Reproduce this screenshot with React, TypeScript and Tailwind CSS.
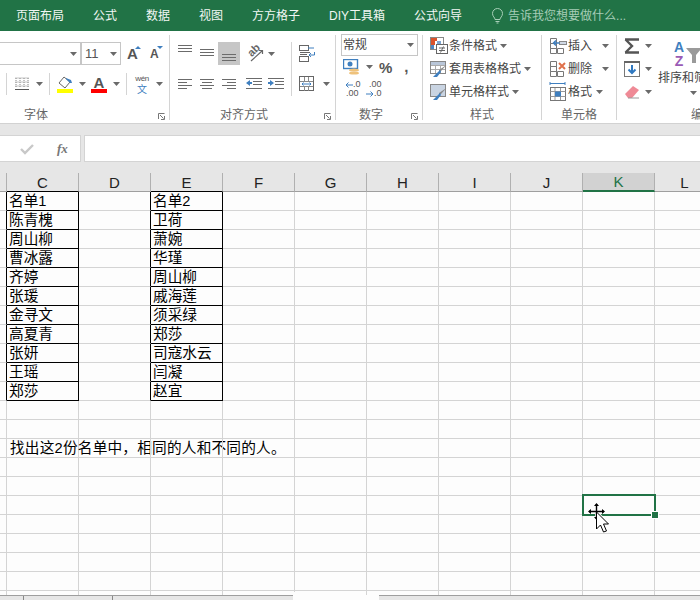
import React from "react";

const C = "#6b6b6b";
const B = "#3f7fbf";

const Caret = ({ className = "" }: { className?: string }) => (
  <svg width="7" height="4" viewBox="0 0 7 4" className={"shrink-0 " + className}>
    <path d="M0 0h7L3.5 4z" fill="#6a6a6a" />
  </svg>
);

const Ic = ({ w, h = 22, className = "", children }: { w: number; h?: number; className?: string; children: React.ReactNode }) => (
  <svg width={w} height={h} viewBox={`0 0 ${w} ${h}`} className={"shrink-0 " + className}>
    {children}
  </svg>
);

const Lines = ({ l, color = C }: { l: number[][]; color?: string }) => (
  <>
    {l.map((a, i) => (
      <rect key={i} x={a[0]} y={a[1]} width={a[2]} height={1} fill={color} />
    ))}
  </>
);

const VSep = ({ className = "" }: { className?: string }) => <div className={"w-px h-[22px] bg-[#d4d4d4] shrink-0 " + className} />;

const Group = ({ w, label, labelClass, launcher, children }: { w: string; label: string; labelClass: string; launcher?: string; children: React.ReactNode }) => (
  <div className={"relative flex flex-col h-[85px] shrink-0 " + w}>
    <div className="flex-1 min-h-0">{children}</div>
    <div className={"h-[14px] -mb-[2px] text-[12px] leading-[14px] text-[#666666] whitespace-nowrap " + labelClass}>{label}</div>
    {launcher && (
      <svg width="7" height="7" viewBox="0 0 7 7" className={"absolute bottom-0 " + launcher}>
        <path d="M0.5 6V0.5H6.5M6.5 3V6.5H3M2 2L5.5 5.5" fill="none" stroke="#777" strokeWidth="1" />
      </svg>
    )}
  </div>
);

const Sep = () => <div className="w-px h-[85px] bg-[#d4d4d4] shrink-0" />;

const IconCond = () => (
  <Ic w={18} h={18}>
    <rect x="0.5" y="0.5" width="13" height="12" fill="#fff" stroke="#888" />
    <rect x="1" y="1" width="6" height="3" fill="#d9532c" />
    <rect x="1" y="4" width="4" height="4" fill="#d9532c" />
    <rect x="7" y="4" width="4" height="3" fill="#7ea6d2" />
    <rect x="1" y="8" width="3" height="4" fill="#4f86c0" />
    <rect x="6.5" y="7.5" width="11" height="9" fill="#fff" stroke="#666" />
    <path d="M9 11h6M9 13.5h6M13.5 9.5l-3 6" stroke="#666" fill="none" />
  </Ic>
);
const IconTable = ({ brushed = true, plain = false }: { brushed?: boolean; plain?: boolean }) => (
  <Ic w={18} h={18}>
    <rect x="0.5" y="1.5" width="15" height="12" fill={plain ? "#c9d4e2" : "#fff"} stroke="#888" />
    {!plain && <path d="M5.5 2v11M10.5 2v11M1 5.5h14M1 9.5h14" stroke="#aaa" />}
    {!plain && <rect x="1" y="2" width="14" height="3" fill="#b9c6d8" />}
    {brushed && <path d="M16.5 5L11 11l-2 0 0-1z" fill="#8a8a8a" />}
    <path d="M10 10l-5 5-2 2h4l4-5z" fill="#3f7fbf" />
  </Ic>
);
const IconCellGrid = ({ kind }: { kind: "ins" | "del" }) => (
  <Ic w={18} h={18}>
    <path d="M1.5 1.5h6v5h-6zM1.5 11.5h6v5h-6zM8.5 11.5h6v5h-6zM1.5 6.5h6v5h-6z" fill="#fff" stroke="#777" />
    {kind === "ins" ? (
      <>
        <rect x="10.5" y="4.5" width="7" height="3" fill="#cfd8e4" stroke="#888" />
        <path d="M4.5 6h6M7 3.5L4.5 6 7 8.5" stroke="#3f7fbf" strokeWidth="1.5" fill="none" />
      </>
    ) : (
      <path d="M10 3l6 6M16 3l-6 6" stroke="#e0714a" strokeWidth="2" fill="none" />
    )}
  </Ic>
);
const IconFormat = () => (
  <Ic w={18} h={20}>
    <path d="M1 1.5h15M1 0v3M16 0v3" stroke="#3f7fbf" fill="none" />
    <rect x="1.5" y="5.5" width="15" height="13" fill="#fff" stroke="#777" />
    <path d="M1.5 9.5h15M1.5 14.5h15M6 6v12M11.5 6v12" stroke="#999" />
    <rect x="6" y="9.5" width="6" height="5" fill="#3f7fbf" />
  </Ic>
);

const tabs = ["页面布局", "公式", "数据", "视图", "方方格子", "DIY工具箱", "公式向导"];
const cols = ["C", "D", "E", "F", "G", "H", "I", "J", "K", "L"];
const colC = ["名单1", "陈青槐", "周山柳", "曹冰露", "齐婷", "张瑗", "金寻文", "高夏青", "张妍", "王瑶", "郑莎"];
const colE = ["名单2", "卫荷", "萧婉", "华瑾", "周山柳", "戚海莲", "须采绿", "郑莎", "司寇水云", "闫凝", "赵宜"];
const NOTE_ROW = 13;

const StyleRow = ({ icon, label, caretClass }: { icon: React.ReactNode; label: string; caretClass: string }) => (
  <div className="flex items-center h-[23px] pl-[7px]">
    {icon}
    <span className="ml-[1px] text-[12px] text-[#444444] whitespace-nowrap">{label}</span>
    <Caret className={caretClass} />
  </div>
);

export default function App() {
  return (
    <div className="relative w-[700px] h-[600px] overflow-hidden flex flex-col bg-[#e6e6e6] font-['Liberation_Sans','Noto_Sans_CJK_SC',sans-serif]">
      {/* title tabs */}
      <div className="h-[31px] bg-[#217346] flex items-center pl-[16px] shrink-0">
        <div className="flex gap-[29px] text-[12px] text-[#f2f7f4] whitespace-nowrap">
          {tabs.map((t) => (
            <span key={t}>{t}</span>
          ))}
        </div>
        <svg width="13" height="16" viewBox="0 0 13 16" className="ml-[29px] shrink-0">
          <path d="M4 11.5C4 9.5 1.5 8.5 1.5 5.5a5 5 0 0 1 10 0c0 3-2.5 4-2.5 6zM4.5 13.5h4M5.5 15h2" fill="none" stroke="#a9cfb9" />
        </svg>
        <span className="ml-[4px] text-[12px] text-[#a6cdb7] whitespace-nowrap">告诉我您想要做什么...</span>
      </div>

      {/* ribbon */}
      <div className="h-[93px] bg-white border-b border-[#d2d2d2] flex pt-[4px] overflow-hidden shrink-0">
        <Group w="w-[169px]" label="字体" labelClass="pl-[24px]" launcher="left-[158px]">
          <div className="flex items-center h-[23px] mt-[7px]">
            <div className="w-[81px] h-[23px] bg-white border border-l-0 border-[#c6c6c6] flex items-center justify-end pr-[3px]">
              <Caret />
            </div>
            <div className="w-[40px] h-[23px] border border-[#c6c6c6] flex items-center pl-[3px] pr-[3px] justify-between">
              <span className="text-[13px] text-[#555555]">11</span>
              <Caret />
            </div>
            <div className="ml-[6px] w-[14px] flex items-start">
              <span className="w-[11px] text-[15px] leading-[17px] font-bold text-[#555555]">A</span>
              <Ic w={6} h={3} className="-ml-[3px] mt-[1px]">
                <path d="M0 3l3-3 3 3z" fill={B} />
              </Ic>
            </div>
            <div className="ml-[9px] w-[13px] flex items-start">
              <span className="w-[8px] text-[12px] leading-[17px] font-bold text-[#555555] mt-[1px]">A</span>
              <Ic w={6} h={3} className="-ml-[1px] mt-[1px]">
                <path d="M0 0h6L3 3z" fill={B} />
              </Ic>
            </div>
          </div>
          <div className="flex items-center h-[22px] mt-[8px] pl-[6px]">
            <VSep />
            <Ic w={14} h={14} className="ml-[8px]">
              <path d="M0.5 1h13M0.5 5h13M0.5 9h13M1 1v9M5 1v9M9 1v9M13 1v9" stroke="#888" strokeDasharray="1 1" fill="none" />
              <rect x="0" y="12" width="14" height="1" fill="#555" />
            </Ic>
            <Caret className="ml-[7px]" />
            <VSep className="ml-[6px]" />
            <div className="ml-[7px] flex flex-col w-[16px]">
              <Ic w={16} h={13}>
                <path d="M7 1l6 5-5 6-6-5z" fill="#fff" stroke="#666" />
                <path d="M9 2l5 2 1 3-2 0-4-4z" fill={B} />
              </Ic>
              <div className="h-[4px] bg-[#ffff00] w-[16px]" />
            </div>
            <Caret className="ml-[6px]" />
            <div className="ml-[5px] flex flex-col w-[16px] items-center">
              <span className="h-[13px] leading-[14px] text-[15px] font-bold text-[#555555]">A</span>
              <div className="h-[4px] bg-[#ff0000] w-[16px]" />
            </div>
            <Caret className="ml-[6px]" />
            <VSep className="ml-[6px]" />
            <div className="ml-[7px] w-[16px] flex flex-col items-center">
              <span className="text-[8px] leading-[10px] text-[#555555] tracking-tighter">wén</span>
              <span className="text-[10px] leading-[11px] text-[#3f7fbf]">文</span>
            </div>
            <Caret className="ml-[6px]" />
          </div>
        </Group>
        <Sep />
        <Group w="w-[165px]" label="对齐方式" labelClass="pl-[50px]" launcher="left-[154px]">
          <div className="flex items-center h-[23px] mt-[7px] pl-[8px]">
            <Ic w={14} h={23}>
              <Lines l={[[0, 3, 14], [0, 6, 14], [0, 9, 14]]} />
            </Ic>
            <Ic w={14} h={23} className="ml-[8px]">
              <Lines l={[[0, 7, 14], [0, 10, 14], [0, 13, 14]]} />
            </Ic>
            <div className="ml-[4px] w-[22px] h-[23px] bg-[#c6c6c6] flex items-center justify-center">
              <Ic w={14} h={23}>
                <Lines l={[[0, 12, 14], [0, 15, 14], [0, 18, 14]]} />
              </Ic>
            </div>
            <div className="relative ml-[6px] w-[18px] h-[20px]">
              <span className="absolute left-[1px] top-[0px] text-[11px] leading-[12px] font-bold text-[#666666] -rotate-45">ab</span>
              <Ic w={18} h={20} className="absolute left-0 top-0">
                <path d="M5 17L16 7M13 6.5h3.5V10" stroke="#666" fill="none" strokeWidth="1.2" />
              </Ic>
            </div>
            <Caret className="ml-[4px]" />
            <VSep className="ml-[16px] h-[54px] -mb-[31px] mt-[0px]" />
            <Ic w={17} h={18} className="ml-[7px]">
              <rect x="0.5" y="0.5" width="9" height="5" fill="none" stroke="#666" />
              <rect x="0.5" y="11.5" width="9" height="5" fill="none" stroke="#666" />
              <path d="M1 7.5h10M1 9.5h7" stroke="#666" />
              <path d="M9 3h6" stroke={B} />
              <path d="M15.5 7v3H10M12 8l-2 2 2 2" stroke={B} fill="none" />
            </Ic>
          </div>
          <div className="flex items-center h-[22px] mt-[8px] pl-[8px]">
            <Ic w={14}>
              <Lines l={[[0, 6, 14], [0, 9, 9], [0, 12, 14], [0, 15, 9]]} />
            </Ic>
            <Ic w={14} className="ml-[8px]">
              <Lines l={[[0, 6, 14], [2, 9, 10], [0, 12, 14], [2, 15, 10]]} />
            </Ic>
            <Ic w={14} className="ml-[8px]">
              <Lines l={[[0, 6, 14], [5, 9, 9], [0, 12, 14], [5, 15, 9]]} />
            </Ic>
            <Ic w={16} className="ml-[10px]">
              <Lines l={[[0, 5, 16], [7, 8, 9], [7, 11, 9], [0, 15, 16]]} />
              <path d="M0 10l4-3v2h2v2H4v2z" fill={B} />
            </Ic>
            <Ic w={16} className="ml-[6px]">
              <Lines l={[[0, 5, 16], [7, 8, 9], [7, 11, 9], [0, 15, 16]]} />
              <path d="M6 10L2 7v2H0v2h2v2z" fill={B} />
            </Ic>
            <Ic w={16} className="ml-[15px]">
              <rect x="0.5" y="3.5" width="14" height="14" fill="none" stroke="#666" />
              <path d="M1 8.5h13M1 13.5h13M5.5 4v4M9.5 4v4M5.5 14v4M9.5 14v4" stroke="#888" />
              <path d="M3 11h9M4.5 9.5L3 11l1.5 1.5M10.5 9.5L12 11l-1.5 1.5" stroke={B} fill="none" />
            </Ic>
            <Caret className="ml-[8px]" />
          </div>
        </Group>
        <Sep />
        <Group w="w-[86px]" label="数字" labelClass="pl-[23px]" launcher="left-[75px]">
          <div className="ml-[5px] mt-[-1px] w-[77px] h-[22px] border border-[#c6c6c6] flex items-center justify-between pl-[1px] pr-[3px]">
            <span className="text-[12px] text-[#444444]">常规</span>
            <Caret />
          </div>
          <div className="flex items-center h-[22px] pl-[7px]">
            <Ic w={17} h={16}>
              <rect x="0.5" y="0.5" width="14" height="9" fill="#fff" stroke="#3f7fbf" strokeWidth="1.4" />
              <circle cx="7" cy="5" r="2.5" fill="#3f7fbf" />
              <ellipse cx="11" cy="11" rx="5" ry="1.6" fill="#efc27b" />
              <ellipse cx="11" cy="14" rx="5" ry="1.6" fill="#efc27b" />
            </Ic>
            <Caret className="ml-[6px]" />
            <span className="ml-[6px] text-[15px] font-bold text-[#555555] leading-none">%</span>
            <span className="ml-[12px] text-[15px] font-bold text-[#555555] leading-none -mt-[2px]">,</span>
          </div>
          <div className="flex items-center h-[22px] pl-[9px]">
            <div className="w-[18px] flex flex-col text-[9px] leading-[9px] text-[#555555]">
              <div className="flex items-center">
                <Ic w={8} h={6}>
                  <path d="M8 3H1M3.5 .5L1 3l2.5 2.5" stroke={B} fill="none" />
                </Ic>
                <span>.0</span>
              </div>
              <span className="pl-[1px]">.00</span>
            </div>
            <div className="ml-[3px] w-[16px] flex flex-col text-[9px] leading-[9px] text-[#555555]">
              <span className="pl-[3px]">.00</span>
              <div className="flex items-center">
                <Ic w={8} h={6}>
                  <path d="M0 3h7M4.5 .5L7 3 4.5 5.500" stroke={B} fill="none" />
                </Ic>
                <span>.0</span>
              </div>
            </div>
          </div>
        </Group>
        <Sep />
        <Group w="w-[118px]" label="样式" labelClass="pl-[47px]">
          <div className="mt-[-1px]">
            <StyleRow icon={<IconCond />} label="条件格式" caretClass="ml-[3px]" />
            <StyleRow icon={<IconTable />} label="套用表格格式" caretClass="ml-[3px]" />
            <StyleRow icon={<IconTable plain />} label="单元格样式" caretClass="ml-[3px]" />
          </div>
        </Group>
        <Sep />
        <Group w="w-[74px]" label="单元格" labelClass="pl-[19px]">
          <div className="mt-[-1px]">
            <div className="flex items-center h-[23px] pl-[7px]">
              <IconCellGrid kind="ins" />
              <span className="ml-[1px] text-[12px] text-[#444444]">插入</span>
              <Caret className="ml-[10px]" />
            </div>
            <div className="flex items-center h-[23px] pl-[7px]">
              <IconCellGrid kind="del" />
              <span className="ml-[1px] text-[12px] text-[#444444]">删除</span>
              <Caret className="ml-[10px]" />
            </div>
            <div className="flex items-center h-[23px] pl-[7px]">
              <IconFormat />
              <span className="ml-[1px] text-[12px] text-[#444444]">格式</span>
              <Caret className="ml-[4px]" />
            </div>
          </div>
        </Group>
        <Sep />
        <div className="relative flex-1 min-w-0 h-[85px] flex">
          <div className="w-[40px] shrink-0 mt-[-1px]">
            <div className="flex items-center h-[23px] pl-[7px]">
              <Ic w={16} h={16}>
                <path d="M1 1.500h14M1.500 1.500L8 8l-6.500 6.500M1 14.500h14" stroke="#555" strokeWidth="2.400" fill="none" />
              </Ic>
              <Caret className="ml-[5px]" />
            </div>
            <div className="flex items-center h-[23px] pl-[7px]">
              <Ic w={16} h={16}>
                <rect x="0.5" y="0.5" width="15" height="15" fill="#fff" stroke="#777" />
                <rect x="0" y="0" width="16" height="2" fill="#666" />
                <path d="M8 4v8M4.5 8.5L8 12l3.500-3.500" stroke="#2f78c0" strokeWidth="2" fill="none" />
              </Ic>
              <Caret className="ml-[5px]" />
            </div>
            <div className="flex items-center h-[23px] pl-[7px]">
              <Ic w={16} h={16}>
                <path d="M1 10L9 2l6 4-7 8H4z" fill="#ef8a96" />
                <path d="M4 14h11" stroke="#999" />
              </Ic>
              <Caret className="ml-[5px]" />
            </div>
          </div>
          <div className="w-[43px] shrink-0 ml-[1px] flex flex-col items-start">
            <div className="ml-[14px] mt-[5px] h-[28px] flex items-start">
              <div className="w-[14px] flex flex-col items-center text-[14px] leading-[14px] font-bold">
                <span className="text-[#3f7fbf]">A</span>
                <span className="text-[#9a5bb5]">Z</span>
              </div>
              <Ic w={16} h={16} className="mt-[7px]">
                <path d="M0 1h16l-6 7v8H6V8z" fill="#9a9a9a" />
              </Ic>
            </div>
            <span className="text-[12px] leading-[14px] text-[#444444] whitespace-nowrap mt-[3px]">排序和筛选</span>
            <Caret className="ml-[32px] mt-[6px]" />
          </div>
          <span className="absolute left-[74px] bottom-[-2px] text-[12px] leading-[14px] text-[#666666] whitespace-nowrap">编辑</span>
        </div>
      </div>

      {/* formula bar */}
      <div className="h-[27px] mt-[11px] flex shrink-0">
        <div className="w-[81px] bg-white border border-l-0 border-[#d4d4d4] flex items-center pl-[20px]">
          <Ic w={14} h={12}>
            <path d="M1 6l4 4 8-8" stroke="#c8c8c8" strokeWidth="2.400" fill="none" />
          </Ic>
          <span className="ml-[23px] text-[13px] font-bold italic text-[#777777] font-['Liberation_Serif',serif]">fx</span>
        </div>
        <div className="flex-1 ml-[3px] bg-white border border-r-0 border-[#d4d4d4]" />
      </div>

      {/* column headers */}
      <div className="h-[19px] mt-[11px] flex shrink-0">
        <div className="w-[7px] border-r border-b border-r-[#b0b0b0] border-b-[#9f9f9f] shrink-0" />
        {cols.map((c) => {
          const black = c === "C" || c === "E";
          const sel = c === "K";
          return (
            <div
              key={c}
              className={
                "shrink-0 flex items-center justify-center text-[15px] leading-none " +
                (c === "L" ? "w-[60px] " : "w-[72px] ") +
                (sel
                  ? "bg-[#d2d2d2] text-[#217346] border-b-2 border-b-[#217346] border-r border-r-[#b0b0b0]"
                  : "text-[#222222] border-r border-r-[#b0b0b0] border-b " + (black ? "border-b-black" : "border-b-[#9f9f9f]"))
              }
            >
              {c}
            </div>
          );
        })}
      </div>

      {/* sheet */}
      <div className="relative flex-1 min-h-0 overflow-hidden bg-[#fdfdfd] text-[14.67px] text-black">
        {Array.from({ length: 22 }).map((_, r) => {
          const inT = r < 11;
          return (
            <div key={r} className="flex h-[19px]">
              <div className={"w-[7px] shrink-0 border-b border-b-[#d4d4d4] border-r " + (inT ? "border-r-black" : "border-r-[#d4d4d4]")} />
              {cols.map((c) => {
                const rb = inT && (c === "C" || c === "D" || c === "E");
                const bb = inT && (c === "C" || c === "E");
                const txt = inT && c === "C" ? colC[r] : inT && c === "E" ? colE[r] : "";
                return (
                  <div
                    key={c}
                    className={
                      "shrink-0 border-b border-r h-[19px] leading-[18px] pl-[2px] whitespace-nowrap " +
                      (c === "L" ? "w-[60px] " : "w-[72px] ") +
                      (rb ? "border-r-black " : "border-r-[#d4d4d4] ") +
                      (bb ? "border-b-black" : "border-b-[#d4d4d4]")
                    }
                  >
                    {txt}
                    {r === NOTE_ROW && c === "C" ? <span className="pl-px tracking-[0.2px]">找出这2份名单中，相同的人和不同的人。</span> : null}
                  </div>
                );
              })}
            </div>
          );
        })}

        {/* selection */}
        <div className="absolute left-[582px] top-[302px] w-[74px] h-[22px] border-2 border-[#217346]" />
        <div className="absolute left-[652px] top-[320px] w-[6px] h-[6px] bg-[#217346] outline outline-1 outline-white" />
        {/* cursor */}
        <svg width="22" height="30" viewBox="0 0 22 30" className="absolute left-[587px] top-[311px]">
          <path d="M9.5 1v15M2 8.500h15M9.500 9v17l4-4 3 7 3-1-3-7h5z" stroke="#fff" strokeWidth="3" fill="none" />
          <path d="M9.5 1v15M2 8.500h15" stroke="#000" strokeWidth="1.4" fill="none" />
          <path d="M9.5 0l2.500 3H7zM9.500 17l2.500-3H7zM1 8.500l3-2.500v5zM18 8.500l-3-2.500v5z" fill="#000" />
          <path d="M9.5 9v17l4-4 3 7 3-1-3-7h5z" fill="#fff" stroke="#000" strokeWidth="1" />
        </svg>
      </div>

      {/* bottom bar */}
      <div className="relative h-[5px] shrink-0 bg-[#e6e6e6] border-t border-[#9e9e9e] flex">
        <div className="ml-[23px] w-px h-[4px] bg-[#888888]" />
        <div className="ml-[88px] w-px h-[4px] bg-[#888888]" />
        <div className="absolute left-[293px] top-[-4px] w-[86px] h-[9px] bg-[#fdfdfd]">
          <div className="ml-[73px] w-px h-[3px] bg-[#d4d4d4]" />
        </div>
      </div>
    </div>
  );
}
